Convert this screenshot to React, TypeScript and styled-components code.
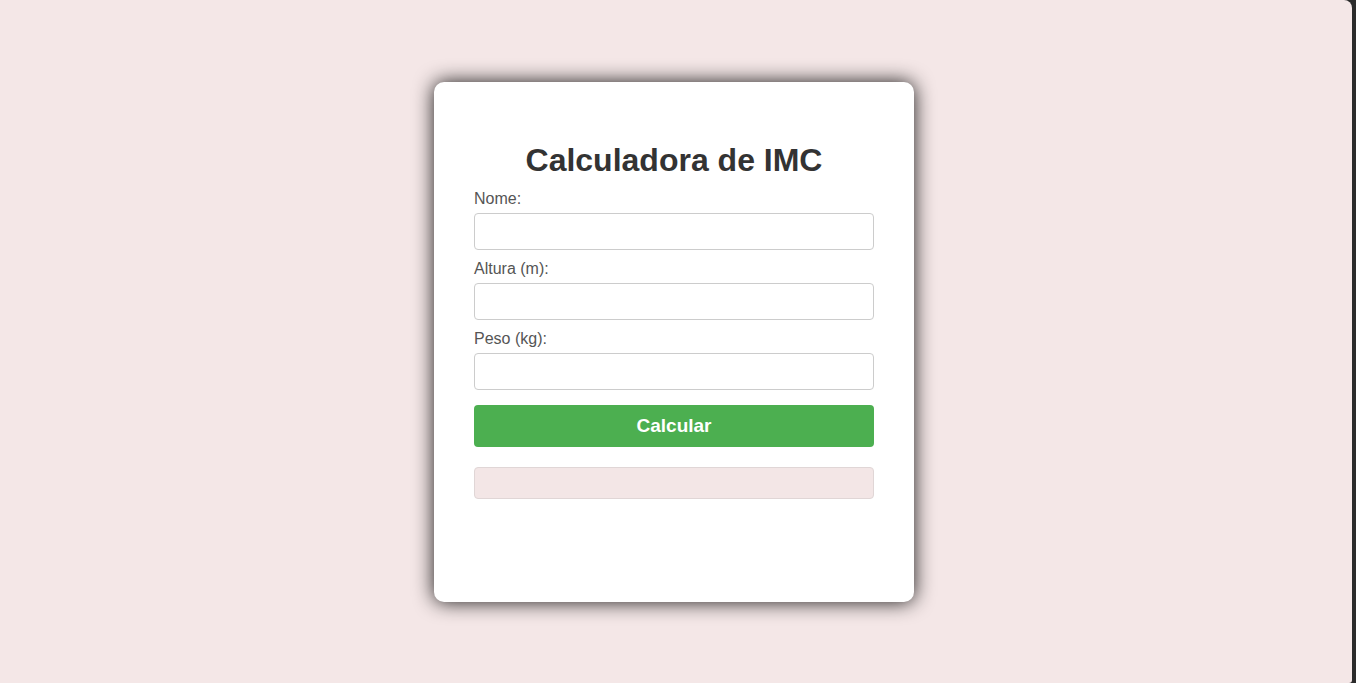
import React from "react";
import styled, { createGlobalStyle } from "styled-components";

const Global = createGlobalStyle`
  html, body {
    margin: 0;
    padding: 0;
    background: #2b2b2b;
    height: 100%;
    overflow: hidden;
  }
  * { box-sizing: border-box; }
`;

const Page = styled.div`
  width: calc(100vw - 4px);
  height: 100vh;
  background: #f4e7e7;
  border-top-right-radius: 8px;
  border-bottom-right-radius: 3px;
  display: flex;
  align-items: center;
  justify-content: center;
  padding-right: 4px;
  font-family: "Liberation Sans", Arial, sans-serif;
`;

const Card = styled.div`
  width: 480px;
  height: 520px;
  background: #ffffff;
  border-radius: 10px;
  padding: 40px;
  box-shadow: 0 0 20px rgba(0, 0, 0, 0.9);
  display: flex;
  flex-direction: column;
`;

const Title = styled.h1`
  margin: 20px 0 11px;
  font-size: 32px;
  font-weight: bold;
  color: #333333;
  text-align: center;
`;

const Label = styled.label`
  display: block;
  font-size: 16px;
  color: #555555;
  margin-bottom: 5px;
`;

const Input = styled.input`
  display: block;
  width: 100%;
  height: 37px;
  padding: 8px;
  border: 1px solid #cccccc;
  border-radius: 4px;
  font-size: 16px;
  font-family: inherit;
  margin-bottom: ${(p: { $last?: boolean }) => (p.$last ? "15px" : "10px")};
  background: #fff;
  outline: none;
`;

const Button = styled.button`
  width: 100%;
  height: 42px;
  border: none;
  border-radius: 4px;
  background: #4caf50;
  color: #ffffff;
  font-size: 19px;
  font-weight: bold;
  font-family: inherit;
  cursor: pointer;
`;

const Result = styled.div`
  margin-top: 20px;
  height: 32px;
  padding: 15px;
  border: 1px solid #e0d6d6;
  border-radius: 4px;
  background: #f3e6e6;
`;

export default function App() {
  return (
    <>
      <Global />
      <Page>
        <Card>
          <Title>Calculadora de IMC</Title>
          <Label htmlFor="nome">Nome:</Label>
          <Input id="nome" type="text" />
          <Label htmlFor="altura">Altura (m):</Label>
          <Input id="altura" type="text" />
          <Label htmlFor="peso">Peso (kg):</Label>
          <Input id="peso" type="text" $last />
          <Button>Calcular</Button>
          <Result />
        </Card>
      </Page>
    </>
  );
}
